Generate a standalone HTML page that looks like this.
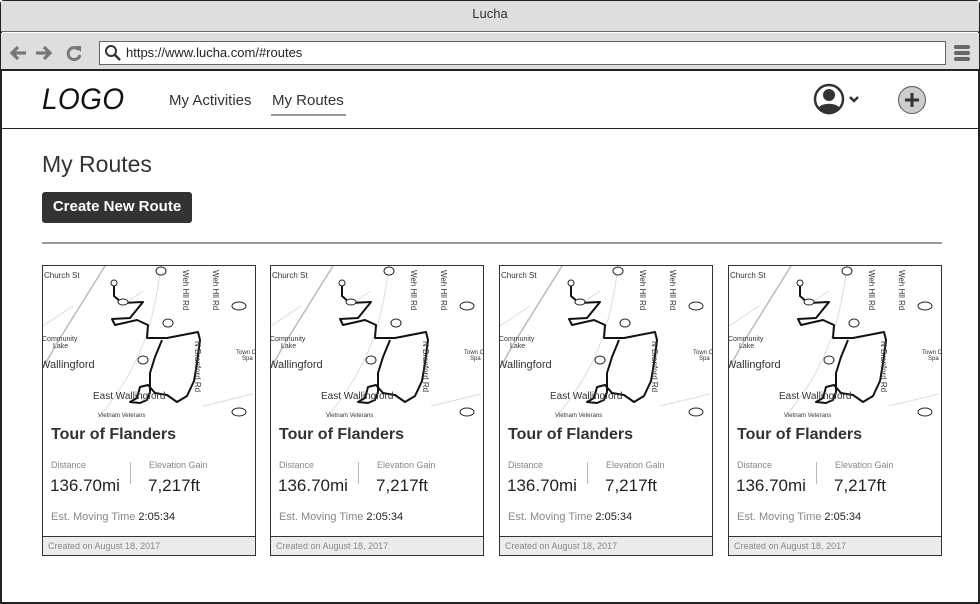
<!DOCTYPE html>
<html><head><meta charset="utf-8"><style>
*{margin:0;padding:0;box-sizing:border-box}
body{width:980px;height:604px;background:#fff;font-family:"Liberation Sans",sans-serif;position:relative;overflow:hidden}
.abs{position:absolute}
.frame{left:0;top:0;width:980px;height:604px;border:2px solid #222;border-radius:4px 4px 0 0}
.titlebar{left:1px;top:1px;width:978px;height:31px;background:#dedede;border-bottom:1px solid #666;text-align:center;font-size:13px;line-height:26px;color:#333}
.toolbar{left:1px;top:33px;width:978px;height:38px;background:#dedede;border-bottom:2px solid #222}
.url{left:99px;top:41px;width:847px;height:24px;background:#fff;border:1px solid #666;font-size:13px;line-height:22px;padding-left:26px;color:#222}
.nav a{position:absolute;font-size:15px;color:#333}
.card{position:absolute;top:265px;width:214px;height:291px;border:1px solid #333;background:#fff}
.card h3{position:absolute;left:8px;top:160px;font-size:16px;font-weight:bold;color:#333}
.lbl{position:absolute;top:194px;font-size:9px;color:#888}
.val{position:absolute;top:210px;font-size:17px;color:#222}
.sep{position:absolute;left:87px;top:196px;width:1px;height:22px;background:#bbb}
.mt{position:absolute;left:8px;top:245px;font-size:11px;color:#888}
.mt span{color:#222}
.foot{position:absolute;left:0;bottom:0;width:212px;height:19px;background:#ececec;border-top:1px solid #333;font-size:9px;color:#888;padding:4px 0 0 5px}
</style></head><body>
<div class="abs frame"></div>
<div class="abs titlebar">Lucha</div>
<div class="abs toolbar"></div>
<svg class="abs" style="left:8px;top:44px" width="80" height="20" viewBox="0 0 80 20">
<path d="M18 9H5M10 3L4 9l6 6" stroke="#777" stroke-width="3.2" fill="none"/>
<path d="M28 9h13M36 3l6 6-6 6" stroke="#777" stroke-width="3.2" fill="none"/>
<path d="M71 6a6 6 0 1 0 1 5" stroke="#777" stroke-width="3" fill="none"/><path d="M67 2l6 0 0 6z" fill="#777"/>
</svg>
<div class="abs url">https://www.lucha.com/#routes</div>
<svg class="abs" style="left:104px;top:44px" width="18" height="18"><circle cx="7" cy="7" r="5" stroke="#333" stroke-width="2" fill="none"/><path d="M11 11l5 5" stroke="#333" stroke-width="2.5"/></svg>
<div class="abs" style="left:954px;top:45px;width:16px;height:3.5px;background:#666;border-radius:2px"></div>
<div class="abs" style="left:954px;top:51px;width:16px;height:3.5px;background:#666;border-radius:2px"></div>
<div class="abs" style="left:954px;top:57px;width:16px;height:3.5px;background:#666;border-radius:2px"></div>
<div class="abs" style="left:1px;top:128px;width:978px;height:1px;background:#222"></div>
<div class="abs" style="left:42px;top:83px;font-size:30px;font-style:italic;color:#111;letter-spacing:0.5px;transform:scaleX(0.93);transform-origin:left">LOGO</div>
<div class="nav"><a style="left:169px;top:92px">My Activities</a><a style="left:272px;top:92px">My Routes</a></div>
<div class="abs" style="left:271px;top:114px;width:75px;height:2px;background:#999"></div>
<svg class="abs" style="left:813px;top:83px" width="54" height="34"><circle cx="16" cy="16" r="14" fill="#fff" stroke="#333" stroke-width="2.5"/><circle cx="16" cy="12" r="6" fill="#333"/><path d="M5 26c2-7 20-7 22 0a14 14 0 0 1-22 0z" fill="#333"/><path d="M37 14l4 4 4-4" stroke="#333" stroke-width="2.5" fill="none"/></svg>
<svg class="abs" style="left:897px;top:85px" width="30" height="30"><circle cx="15" cy="15" r="13.5" fill="#ccc" stroke="#555" stroke-width="1"/><path d="M15 8v14M8 15h14" stroke="#333" stroke-width="3"/></svg>
<div class="abs" style="left:42px;top:151px;font-size:23px;color:#333">My Routes</div>
<div class="abs" style="left:42px;top:192px;width:150px;height:31px;background:#333;border-radius:3px;color:#fff;font-size:15px;font-weight:bold;line-height:29px;text-align:center">Create New Route</div>
<div class="abs" style="left:42px;top:242px;width:900px;height:2px;background:#999"></div>

<svg width="0" height="0" style="position:absolute"><defs><g id="map">
<path d="M62 0L14 77 0 102" stroke="#bbb" stroke-width="1.5" fill="none"/>
<path d="M118 0C112 50 100 100 55 152" stroke="#ddd" stroke-width="1" fill="none"/>
<path d="M0 60L30 40M160 140L210 128M85 35L100 25" stroke="#ddd" stroke-width="1" fill="none"/>
<path d="M71 19v11l8 7 21-1-13 16-18 1 3 6 22-5 11 5-1 13 20 0 31-6 2 8-3 23-3 18-7 15-10 6-10-7-12-2-7-8-8 2-3 11-7 4 10 1 7-3 3-8 0-19 5-16 7-17" stroke="#111" stroke-width="2" fill="none" stroke-linejoin="round"/>
<circle cx="71" cy="17" r="3" fill="#fff" stroke="#222" stroke-width="1"/>
<text x="1" y="12" font-size="8" fill="#333">Church St</text>
<text x="-1" y="75" font-size="7" fill="#333">Community</text><text x="10" y="82" font-size="7" fill="#333">Lake</text>
<text x="-3" y="102" font-size="11" fill="#333">Wallingford</text>
<text x="50" y="133" font-size="10" fill="#333">East Wallingford</text>
<text x="55" y="151" font-size="6" fill="#333">Vietnam Veterans</text>
<text x="193" y="88" font-size="6" fill="#333">Town C</text><text x="199" y="94" font-size="6" fill="#333">Spa</text>
<text x="140" y="4" font-size="8" fill="#333" transform="rotate(90 140 4)">Weh Hll Rd</text>
<text x="170" y="4" font-size="8" fill="#333" transform="rotate(90 170 4)">Weh Hll Rd</text>
<text x="152" y="75" font-size="8" fill="#333" transform="rotate(90 152 75)">N Branford Rd</text>
<ellipse cx="118" cy="5" rx="5" ry="4" fill="#fff" stroke="#222"/><ellipse cx="125" cy="57" rx="5" ry="4" fill="#fff" stroke="#222"/>
<ellipse cx="196" cy="40" rx="7" ry="4" fill="#fff" stroke="#222"/><ellipse cx="100" cy="94" rx="5" ry="4" fill="#fff" stroke="#222"/>
<ellipse cx="196" cy="146" rx="7" ry="4" fill="#fff" stroke="#222"/><ellipse cx="80" cy="36" rx="5" ry="3" fill="#fff" stroke="#222"/>
</g></defs></svg>

<div class="card" style="left:42px"><svg width="212" height="152"><use href="#map"/></svg><h3>Tour of Flanders</h3><div class="lbl" style="left:8px">Distance</div><div class="sep"></div><div class="lbl" style="left:106px">Elevation Gain</div><div class="val" style="left:7px">136.70mi</div><div class="val" style="left:105px">7,217ft</div><div class="mt">Est. Moving Time <span>2:05:34</span></div><div class="foot">Created on August 18, 2017</div></div>
<div class="card" style="left:270px"><svg width="212" height="152"><use href="#map"/></svg><h3>Tour of Flanders</h3><div class="lbl" style="left:8px">Distance</div><div class="sep"></div><div class="lbl" style="left:106px">Elevation Gain</div><div class="val" style="left:7px">136.70mi</div><div class="val" style="left:105px">7,217ft</div><div class="mt">Est. Moving Time <span>2:05:34</span></div><div class="foot">Created on August 18, 2017</div></div>
<div class="card" style="left:499px"><svg width="212" height="152"><use href="#map"/></svg><h3>Tour of Flanders</h3><div class="lbl" style="left:8px">Distance</div><div class="sep"></div><div class="lbl" style="left:106px">Elevation Gain</div><div class="val" style="left:7px">136.70mi</div><div class="val" style="left:105px">7,217ft</div><div class="mt">Est. Moving Time <span>2:05:34</span></div><div class="foot">Created on August 18, 2017</div></div>
<div class="card" style="left:728px"><svg width="212" height="152"><use href="#map"/></svg><h3>Tour of Flanders</h3><div class="lbl" style="left:8px">Distance</div><div class="sep"></div><div class="lbl" style="left:106px">Elevation Gain</div><div class="val" style="left:7px">136.70mi</div><div class="val" style="left:105px">7,217ft</div><div class="mt">Est. Moving Time <span>2:05:34</span></div><div class="foot">Created on August 18, 2017</div></div>
</body></html>
